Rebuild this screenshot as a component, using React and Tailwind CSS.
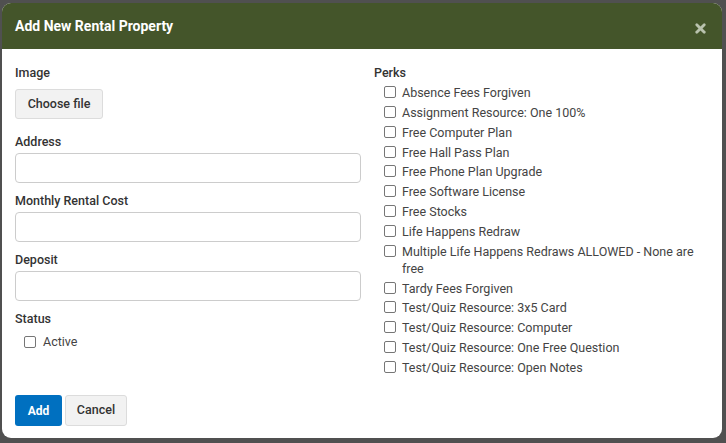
import { X } from 'lucide-react';

const perks = [
  'Absence Fees Forgiven',
  'Assignment Resource: One 100%',
  'Free Computer Plan',
  'Free Hall Pass Plan',
  'Free Phone Plan Upgrade',
  'Free Software License',
  'Free Stocks',
  'Life Happens Redraw',
  'Multiple Life Happens Redraws ALLOWED - None are free',
  'Tardy Fees Forgiven',
  'Test/Quiz Resource: 3x5 Card',
  'Test/Quiz Resource: Computer',
  'Test/Quiz Resource: One Free Question',
  'Test/Quiz Resource: Open Notes',
];

const Box = () => (
  <span className="mt-[2px] w-[12px] h-[12px] shrink-0 rounded-[2px] border border-[#767676] bg-white"></span>
);

const Field = ({ label, first }) => (
  <div className={first ? 'mt-[14px]' : 'mt-[9px]'}>
    <div className="text-[12.5px] font-medium text-[#333] leading-[18px]">{label}</div>
    <div className="mt-[2px] h-[30px] rounded-[4px] border border-[#ccc] bg-white"></div>
  </div>
);

export default function App() {
  return (
    <div
      className="w-[726px] h-[443px] bg-[#505050] pt-[3px] pl-[2px] overflow-hidden"
      style={{ fontFamily: 'Roboto, "Liberation Sans", sans-serif' }}
    >
      <div className="w-[720px] h-[435px] rounded-[9px] bg-white overflow-hidden flex flex-col">
        {/* Header */}
        <div className="h-[46px] shrink-0 bg-[#44552a] flex items-center justify-between pl-[13px] pr-[14px]">
          <h2 className="text-[14px] font-bold text-white">Add New Rental Property</h2>
          <X className="w-[15px] h-[15px] text-[#b9c2ad] mt-[5px]" strokeWidth={4.5} />
        </div>

        {/* Body */}
        <div className="flex-1 grid grid-cols-[346px_1fr] gap-[13px] pl-[13px] pr-[15px] pt-[15px]">
          <div>
            <div className="text-[12.5px] font-medium text-[#333] leading-[18px]">Image</div>
            <button className="mt-[7px] h-[30px] w-[88px] rounded-[3px] border border-[#dcdcdc] bg-[#f2f2f2] text-[12.5px] font-medium text-[#333]">
              Choose file
            </button>
            <Field label="Address" first />
            <Field label="Monthly Rental Cost" />
            <Field label="Deposit" />
            <div className="mt-[9px] text-[12.5px] font-medium text-[#333] leading-[18px]">Status</div>
            <label className="mt-[6px] ml-[9px] flex items-start gap-[7px] text-[12.5px] text-[#444] leading-[17px]">
              <Box />
              <span className="-mt-[1px]">Active</span>
            </label>
          </div>

          <div>
            <div className="text-[12.5px] font-medium text-[#333] leading-[18px]">Perks</div>
            <div className="mt-[2px] pl-[10px] pr-[8px] flex flex-col gap-[2.85px]">
              {perks.map((p) => (
                <label key={p} className="flex items-start gap-[6px] text-[12.5px] text-[#444] leading-[17px]">
                  <Box />
                  <span>{p}</span>
                </label>
              ))}
            </div>
          </div>
        </div>

        {/* Footer */}
        <div className="flex gap-[3px] pl-[13px] pb-[12px]">
          <button className="h-[31px] w-[47px] rounded-[3px] bg-[#0070c0] text-[12px] font-bold text-white">Add</button>
          <button className="h-[31px] w-[62px] rounded-[3px] border border-[#dcdcdc] bg-[#f2f2f2] text-[12.5px] font-medium text-[#333]">
            Cancel
          </button>
        </div>
      </div>
    </div>
  );
}
